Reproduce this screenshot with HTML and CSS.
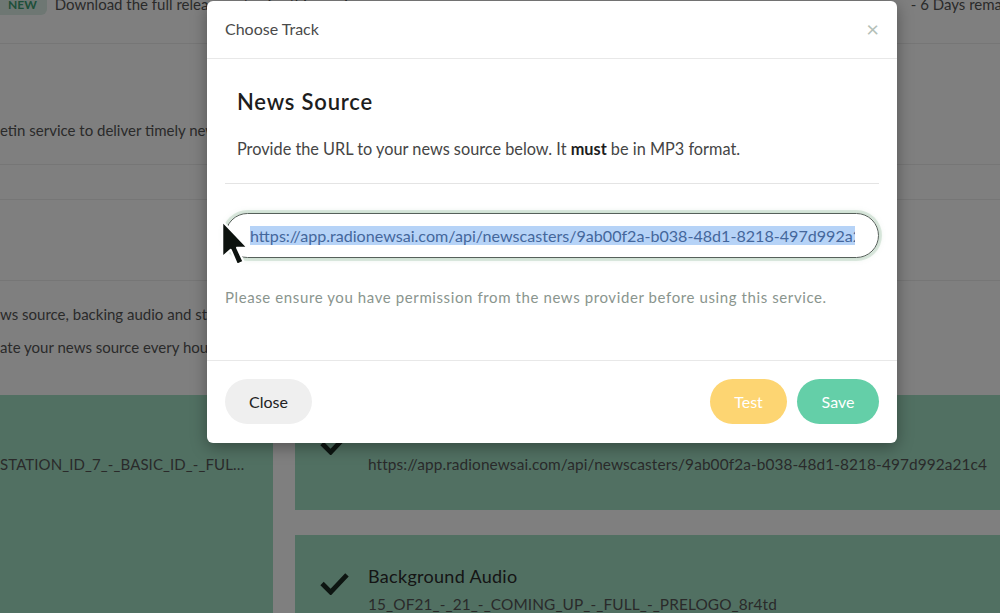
FILE: index.html
```html
<!DOCTYPE html>
<html lang="en">
<head>
    <meta charset="UTF-8">
    <meta name="viewport" content="width=device-width, initial-scale=1.0">
    <title>Choose Track</title>
    <link rel="stylesheet" href="styles.css">
</head>
<body>
    <div class="page">
        <div class="notice-bar">
            <span class="badge">NEW</span>
            <span class="notice-text">Download the full release notes for this version</span>
            <span class="notice-days">- 6 Days remaining</span>
        </div>

        <section class="block block-intro">
            <p>etin service to deliver timely news to your listeners.</p>
        </section>
        <div class="block block-thin"></div>
        <div class="block block-empty"></div>
        <section class="block block-steps">
            <p>ws source, backing audio and station idents below.</p>
            <p>ate your news source every hour.</p>
        </section>

        <div class="tracks">
            <div class="track-side">
                <span class="track-file">STATION_ID_7_-_BASIC_ID_-_FULL_-_PRELOGO</span>
            </div>
            <div class="track-list">
                <div class="track-card">
                    <svg class="check" viewBox="0 0 30 24"><path d="M2 12 L11 21 L28 3" fill="none" stroke="#1b2a22" stroke-width="5"/></svg>
                    <div class="track-info">
                        <div class="track-title">News Source</div>
                        <div class="track-sub">https://app.radionewsai.com/api/newscasters/9ab00f2a-b038-48d1-8218-497d992a21c4</div>
                    </div>
                </div>
                <div class="track-card">
                    <svg class="check" viewBox="0 0 30 24"><path d="M2 12 L11 21 L28 3" fill="none" stroke="#1b2a22" stroke-width="5"/></svg>
                    <div class="track-info">
                        <div class="track-title">Background Audio</div>
                        <div class="track-sub">15_OF21_-_21_-_COMING_UP_-_FULL_-_PRELOGO_8r4td</div>
                    </div>
                </div>
            </div>
        </div>
    </div>

    <div class="overlay"></div>

    <div class="modal">
        <div class="modal-header">
            <span class="modal-title">Choose Track</span>
            <span class="modal-close">&times;</span>
        </div>
        <div class="modal-body">
            <div class="source-intro">
                <h2>News Source</h2>
                <p>Provide the URL to your news source below. It <strong>must</strong> be in MP3 format.</p>
            </div>
            <hr>
            <div class="url-field">
                <div class="url-text"><span class="selected">https://app.radionewsai.com/api/newscasters/9ab00f2a-b038-48d1-8218-497d992a21c4</span></div>
            </div>
            <p class="help">Please ensure you have permission from the news provider before using this service.</p>
        </div>
        <div class="modal-footer">
            <button class="btn btn-close">Close</button>
            <div class="actions">
                <button class="btn btn-test">Test</button>
                <button class="btn btn-save">Save</button>
            </div>
        </div>
    </div>

    <!-- mouse pointer -->
    <svg class="pointer" viewBox="0 0 30 46" width="32" height="49">
        <path d="M3 2 L3 36 L11 29 L17 43 L23 40 L17 27 L27 27 Z" fill="#0c120e" stroke="#fff" stroke-width="2" stroke-linejoin="round"/>
    </svg>
</body>
</html>
```

FILE: styles.css
```css
body {
    margin: 0;
    padding: 0;
    width: 1000px;
    height: 613px;
    overflow: hidden;
    position: relative;
    font-family: 'Lato', 'Noto Sans', sans-serif;
    color: #555;
    background: #fff;
}

p {
    margin: 0;
}

.page {
    width: 1120px;
    font-size: 15px;
}

.notice-bar {
    display: flex;
    align-items: center;
    height: 44px;
    padding-bottom: 36px;
    box-sizing: border-box;
    border-bottom: 1px solid #ececec;
}

.badge {
    background: #dcefe6;
    color: #3d9e73;
    font-size: 12px;
    font-weight: 700;
    padding: 4px 10px 3px 8px;
    border-radius: 0 0 6px 0;
}

.notice-text {
    flex: 0 0 848px;
    margin-left: 8px;
}

.notice-days {
    margin-left: 8px;
    white-space: nowrap;
}

.block {
    box-sizing: border-box;
    border-bottom: 1px solid #ececec;
}

.block-intro {
    height: 121px;
    padding-top: 77px;
}

.block-thin {
    height: 35px;
}

.block-empty {
    height: 81px;
}

.block-steps {
    height: 114px;
    padding-top: 17px;
    border-bottom: none;
}

.block-steps p {
    line-height: 33px;
}

.tracks {
    display: flex;
    gap: 22px;
}

.track-side {
    width: 273px;
    flex-shrink: 0;
    background: #a2e1c5;
    padding-top: 60px;
    box-sizing: border-box;
}

.track-file {
    display: block;
    width: 250px;
    white-space: nowrap;
    overflow: hidden;
    text-overflow: ellipsis;
    letter-spacing: 0.1px;
}

.track-list {
    flex: 1;
    display: flex;
    flex-direction: column;
    gap: 25px;
}

.track-card {
    background: #a2e1c5;
    height: 115px;
    flex-shrink: 0;
    box-sizing: border-box;
    display: flex;
    align-items: flex-start;
    padding: 28px 0 0 25px;
}

.check {
    width: 29px;
    height: 23px;
    flex-shrink: 0;
    margin: 9px 19px 0 0;
}

.track-title {
    font-size: 18px;
    letter-spacing: 0.3px;
    color: #2b2b2b;
    line-height: 26px;
}

.track-sub {
    font-size: 15.4px;
    letter-spacing: 0.1px;
    line-height: 30px;
    white-space: nowrap;
}

.overlay {
    position: absolute;
    top: 0;
    left: 0;
    width: 100%;
    height: 100%;
    background: rgba(0, 0, 0, 0.5);
}

.modal {
    position: absolute;
    top: 1px;
    left: 207px;
    width: 690px;
    background: #fff;
    border-radius: 6px;
    box-shadow: 0 4px 16px rgba(0, 0, 0, 0.35);
}

.modal-header {
    height: 58px;
    box-sizing: border-box;
    display: flex;
    align-items: center;
    justify-content: space-between;
    padding: 0 18px 3px;
    border-bottom: 1px solid #e8e8e8;
}

.modal-title {
    font-size: 16px;
    color: #4a4a4a;
}

.modal-close {
    font-size: 22px;
    color: #b4c0b8;
}

.modal-body {
    padding: 18px 18px 53px;
}

.source-intro {
    padding: 12px 12px 0;
}

.source-intro h2 {
    margin: 0;
    font-size: 22px;
    font-weight: 600;
    letter-spacing: 0.8px;
    color: #1d1d1d;
    line-height: 25px;
}

.source-intro p {
    margin-top: 24px;
    font-size: 16.3px;
    color: #454545;
    line-height: 22px;
}

.source-intro strong {
    color: #1d1d1d;
}

hr {
    border: none;
    border-top: 1px solid #e4e4e4;
    margin: 23px 0 0;
}

.url-field {
    margin-top: 29px;
    height: 45px;
    box-sizing: border-box;
    border: 1.5px solid #56605a;
    border-radius: 23px;
    box-shadow: 0 0 0 3px rgba(120, 170, 130, 0.22), 0 0 6px rgba(120, 170, 130, 0.35);
    padding: 0 23px 0 24px;
    display: flex;
    align-items: center;
}

.url-text {
    overflow: hidden;
    white-space: nowrap;
    font-size: 16.1px;
}

.selected {
    background: #b6d3f7;
    color: #44679c;
    padding: 1px 0;
}

.help {
    margin-top: 29px;
    font-size: 15px;
    letter-spacing: 0.6px;
    line-height: 20px;
    color: #8a958e;
}

.modal-footer {
    display: flex;
    justify-content: space-between;
    padding: 18px 18px 19px;
    border-top: 1px solid #e8e8e8;
}

.actions {
    display: flex;
    gap: 10px;
}

.btn {
    height: 45px;
    border: none;
    border-radius: 23px;
    font-family: inherit;
    font-size: 16px;
    padding: 0;
}

.btn-close {
    width: 87px;
    background: #efefef;
    color: #222;
}

.btn-test {
    width: 77px;
    background: #fdd572;
    color: #fff;
}

.btn-save {
    width: 82px;
    background: #64cfa8;
    color: #fff;
}

.pointer {
    position: absolute;
    left: 219px;
    top: 219px;
}
```
